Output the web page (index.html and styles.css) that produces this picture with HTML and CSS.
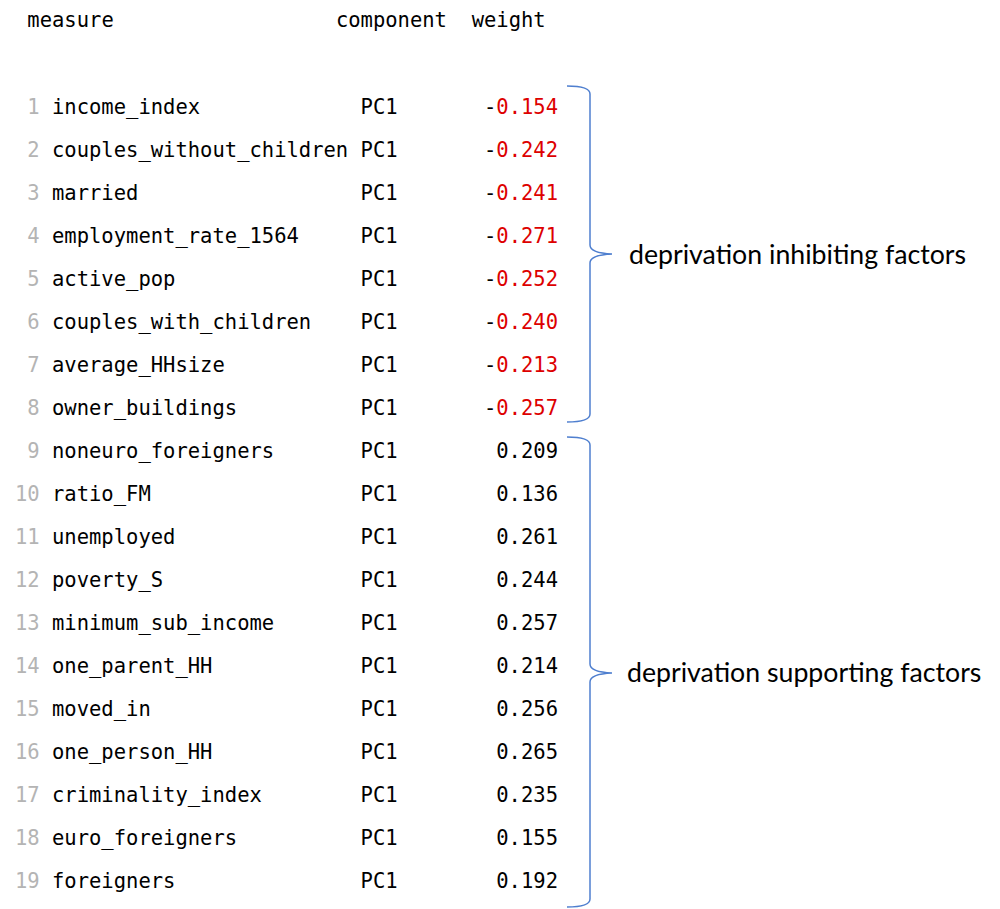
FILE: index.html
```html
<!DOCTYPE html>
<html>
<head>
<meta charset="utf-8">
<link rel="stylesheet" href="styles.css">
</head>
<body>
<div class="page">
  <div class="table">
    <div class="head">
      <span class="h-measure">measure</span>
      <span class="h-comp">component</span>
      <span class="h-weight">weight</span>
    </div>
    <div class="rows">
      <div class="row"><span class="num">1</span><span class="measure">income_index</span><span class="comp">PC1</span><span class="weight">-<span class="neg">0.154</span></span></div>
      <div class="row"><span class="num">2</span><span class="measure">couples_without_children</span><span class="comp">PC1</span><span class="weight">-<span class="neg">0.242</span></span></div>
      <div class="row"><span class="num">3</span><span class="measure">married</span><span class="comp">PC1</span><span class="weight">-<span class="neg">0.241</span></span></div>
      <div class="row"><span class="num">4</span><span class="measure">employment_rate_1564</span><span class="comp">PC1</span><span class="weight">-<span class="neg">0.271</span></span></div>
      <div class="row"><span class="num">5</span><span class="measure">active_pop</span><span class="comp">PC1</span><span class="weight">-<span class="neg">0.252</span></span></div>
      <div class="row"><span class="num">6</span><span class="measure">couples_with_children</span><span class="comp">PC1</span><span class="weight">-<span class="neg">0.240</span></span></div>
      <div class="row"><span class="num">7</span><span class="measure">average_HHsize</span><span class="comp">PC1</span><span class="weight">-<span class="neg">0.213</span></span></div>
      <div class="row"><span class="num">8</span><span class="measure">owner_buildings</span><span class="comp">PC1</span><span class="weight">-<span class="neg">0.257</span></span></div>
      <div class="row"><span class="num">9</span><span class="measure">noneuro_foreigners</span><span class="comp">PC1</span><span class="weight">0.209</span></div>
      <div class="row"><span class="num">10</span><span class="measure">ratio_FM</span><span class="comp">PC1</span><span class="weight">0.136</span></div>
      <div class="row"><span class="num">11</span><span class="measure">unemployed</span><span class="comp">PC1</span><span class="weight">0.261</span></div>
      <div class="row"><span class="num">12</span><span class="measure">poverty_S</span><span class="comp">PC1</span><span class="weight">0.244</span></div>
      <div class="row"><span class="num">13</span><span class="measure">minimum_sub_income</span><span class="comp">PC1</span><span class="weight">0.257</span></div>
      <div class="row"><span class="num">14</span><span class="measure">one_parent_HH</span><span class="comp">PC1</span><span class="weight">0.214</span></div>
      <div class="row"><span class="num">15</span><span class="measure">moved_in</span><span class="comp">PC1</span><span class="weight">0.256</span></div>
      <div class="row"><span class="num">16</span><span class="measure">one_person_HH</span><span class="comp">PC1</span><span class="weight">0.265</span></div>
      <div class="row"><span class="num">17</span><span class="measure">criminality_index</span><span class="comp">PC1</span><span class="weight">0.235</span></div>
      <div class="row"><span class="num">18</span><span class="measure">euro_foreigners</span><span class="comp">PC1</span><span class="weight">0.155</span></div>
      <div class="row"><span class="num">19</span><span class="measure">foreigners</span><span class="comp">PC1</span><span class="weight">0.192</span></div>
    </div>
  </div>

  <svg class="braces" width="1000" height="909" viewBox="0 0 1000 909" aria-hidden="true">
    <path d="M567,86 Q590,86 590,94 L590,245 Q590,253 612,254 Q590,255 590,263 L590,414 Q590,422 567,422"/>
    <path d="M567,437 Q590,437 590,445 L590,664 Q590,672 612,673 Q590,674 590,682 L590,899 Q590,907 567,907"/>
  </svg>
  <div class="label label-inhibit">deprivation inhibiting factors</div>
  <div class="label label-support">deprivation supporting factors</div>
</div>
</body>
</html>
```

FILE: styles.css
```css
html, body {
  margin: 0;
  padding: 0;
  background: #ffffff;
}

.page {
  position: relative;
  width: 1000px;
  height: 909px;
  overflow: hidden;
}

.table {
  padding-left: 15px;
  font-family: "DejaVu Sans Mono", "Liberation Mono", monospace;
  font-size: 20.5px;
  color: #000000;
}

.head {
  display: grid;
  grid-template-columns: 25ch 11ch 6ch;
  padding-left: 1ch;
  height: 40px;
  line-height: 40px;
}

.rows {
  margin-top: 45.5px;
}

.row {
  display: grid;
  grid-template-columns: 2ch 1ch 25ch 10ch 6ch;
  height: 43px;
  line-height: 43px;
}

.num {
  grid-column: 1;
  text-align: right;
  color: #b4b4b4;
}

.measure {
  grid-column: 3;
}

.comp {
  grid-column: 4;
}

.weight {
  grid-column: 5;
  text-align: right;
}

.neg {
  color: #dd0000;
}

.braces {
  position: absolute;
  left: 0;
  top: 0;
  pointer-events: none;
}

.braces path {
  fill: none;
  stroke: #4f7fcf;
  stroke-width: 1.5;
}

.label {
  position: absolute;
  font-family: "Lato", "Open Sans", sans-serif;
  font-size: 26.7px;
  line-height: 30px;
  color: #000000;
  white-space: nowrap;
}

.label-inhibit {
  left: 629px;
  top: 239px;
}

.label-support {
  left: 627px;
  top: 657px;
}
```
